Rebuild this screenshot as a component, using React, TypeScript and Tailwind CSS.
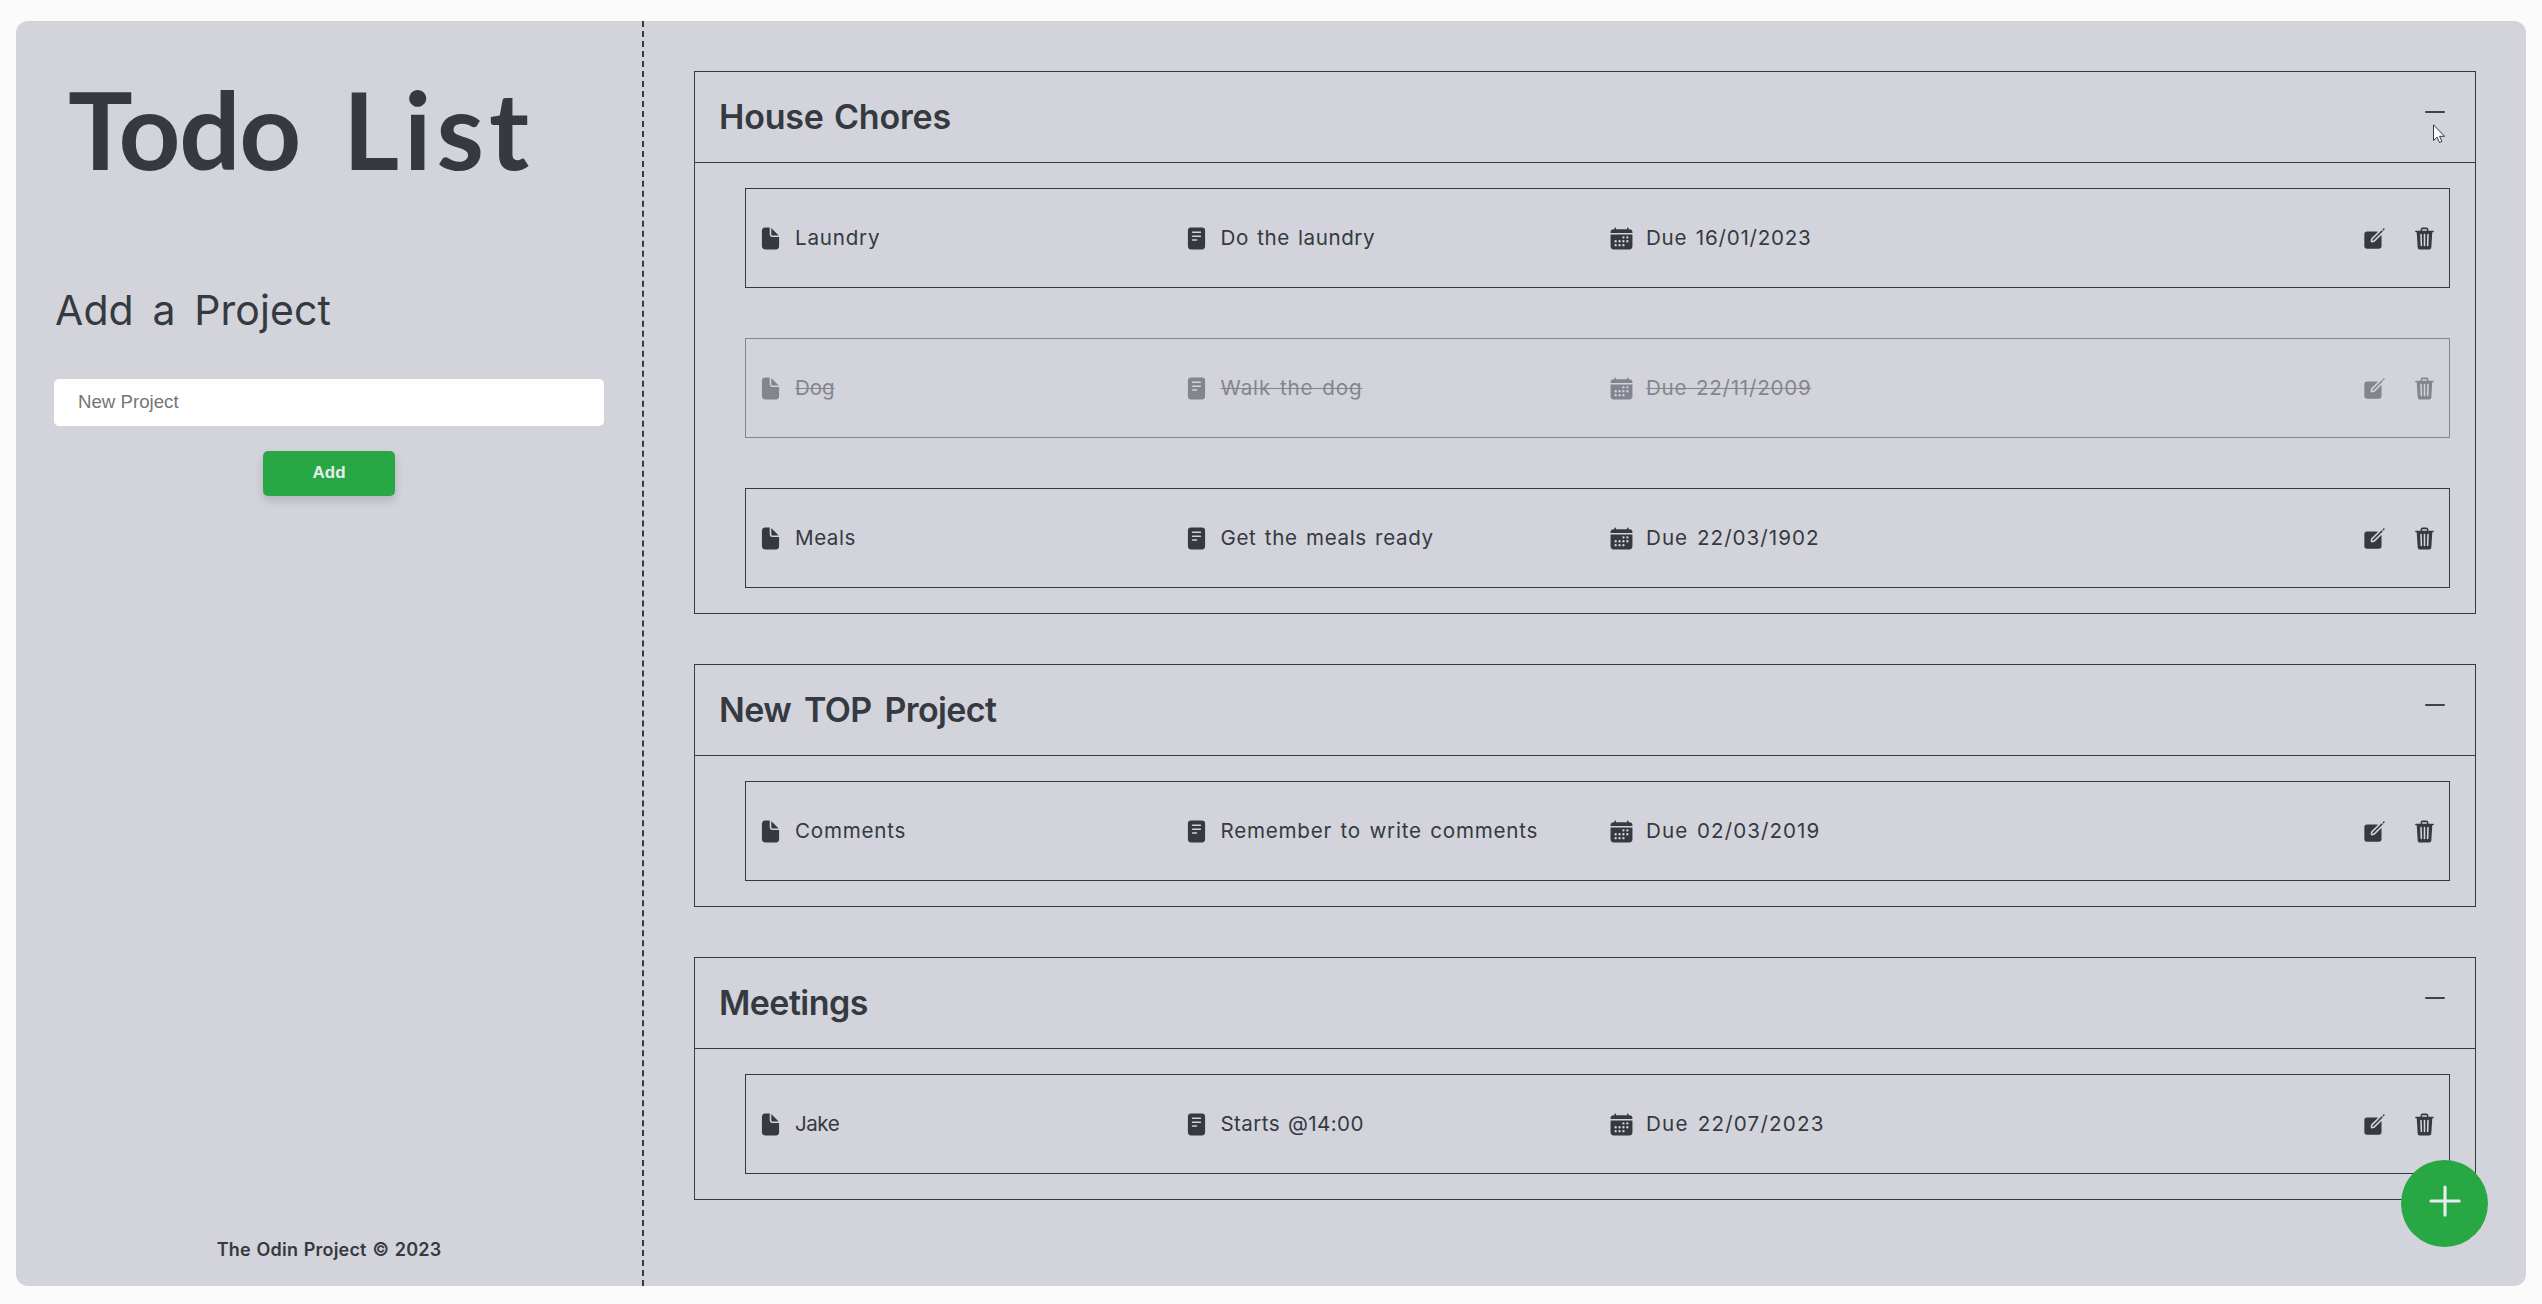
import type { ReactNode } from "react";
import { IoAdd, IoCalendar, IoCreate, IoDocument, IoReader, IoRemove, IoTrash } from "react-icons/io5";

type Label = { text: string; spacing: string };
type Todo = { title: Label; description: Label; due: Label; done?: boolean };
type Project = { name: Label; todos: Todo[] };

const projects: Project[] = [
  {
    name: { text: "House Chores", spacing: "tracking-[-0.2px] [word-spacing:2px]" },
    todos: [
      {
        title: { text: "Laundry", spacing: "tracking-[0.79px]" },
        description: { text: "Do the laundry", spacing: "tracking-[0.55px]" },
        due: { text: "Due 16/01/2023", spacing: "tracking-[0.75px]" },
      },
      {
        title: { text: "Dog", spacing: "tracking-[-0.1px]" },
        description: { text: "Walk the dog", spacing: "tracking-[0.9px]" },
        due: { text: "Due 22/11/2009", spacing: "tracking-[0.76px]" },
        done: true,
      },
      {
        title: { text: "Meals", spacing: "tracking-[0.53px]" },
        description: { text: "Get the meals ready", spacing: "tracking-[0.61px]" },
        due: { text: "Due 22/03/1902", spacing: "tracking-[1.03px]" },
      },
    ],
  },
  {
    name: { text: "New TOP Project", spacing: "tracking-[-0.62px] [word-spacing:5px]" },
    todos: [
      {
        title: { text: "Comments", spacing: "tracking-[0.75px]" },
        description: { text: "Remember to write comments", spacing: "tracking-[0.76px]" },
        due: { text: "Due 02/03/2019", spacing: "tracking-[1.05px]" },
      },
    ],
  },
  {
    name: { text: "Meetings", spacing: "tracking-[-0.55px]" },
    todos: [
      {
        title: { text: "Jake", spacing: "tracking-[-0.5px]" },
        description: { text: "Starts @14:00", spacing: "tracking-[0.38px]" },
        due: { text: "Due 22/07/2023", spacing: "tracking-[1.2px]" },
      },
    ],
  },
];

function Field({ icon, label, done }: { icon: ReactNode; label: Label; done?: boolean }) {
  return (
    <div className="flex items-center gap-3">
      {icon}
      <span className={`mb-px whitespace-nowrap text-[20.6px] leading-[25px] [word-spacing:2px] ${label.spacing} ${done ? "line-through decoration-1" : ""}`}>
        {label.text}
      </span>
    </div>
  );
}

function TodoRow({ todo }: { todo: Todo }) {
  return (
    <li className={`grid h-[100px] grid-cols-[425.5px_425.5px_425.5px_1fr] items-center border border-[#343a40] px-3 ${todo.done ? "opacity-50" : ""}`}>
      <Field icon={<IoDocument className="size-[25px]" />} label={todo.title} done={todo.done} />
      <Field icon={<IoReader className="size-[25px]" />} label={todo.description} done={todo.done} />
      <Field icon={<IoCalendar className="size-[25px]" />} label={todo.due} done={todo.done} />
      <div className="flex justify-end gap-[25px]">
        <IoCreate className="size-[25px]" />
        <IoTrash className="size-[25px]" />
      </div>
    </li>
  );
}

function ProjectCard({ project }: { project: Project }) {
  return (
    <section className="border border-[#343a40]">
      <header className="flex h-[91px] items-center justify-between border-b border-[#343a40] pr-6 pb-0.5 pl-6">
        <h3 className={`text-[34px] leading-[41px] font-semibold ${project.name.spacing}`}>{project.name.text}</h3>
        <IoRemove className="mb-[9px] size-8 text-[#404244]" />
      </header>
      <ul className="flex flex-col gap-[50px] py-[25px] pr-[25px] pl-[50px]">
        {project.todos.map((todo) => (
          <TodoRow key={todo.title.text} todo={todo} />
        ))}
      </ul>
    </section>
  );
}

export default function App() {
  return (
    <div className="h-[1304px] w-[2542px] overflow-hidden bg-[#fbfbfb] px-4 pt-[21px] font-['Inter',sans-serif] text-[#343a40]">
      <div className="relative flex h-[1265px] overflow-hidden rounded-xl bg-[#d3d3dc]">
        <aside className="flex w-[628px] shrink-0 flex-col border-r-2 border-dashed border-[#343a40] px-[38px] pb-[25px]">
          <h1 className="mt-[42px] ml-[14px] flex text-[108px] leading-[130px] font-bold font-['Lato',sans-serif]">
            <span className="w-[275px] tracking-[-1.3px]">Todo</span>
            <span className="tracking-[5px]">List</span>
          </h1>
          <h2 className="mt-[92px] ml-px text-[41px] leading-[50px] tracking-[0.1px] [word-spacing:7px]">Add a Project</h2>
          <input
            placeholder="New Project"
            className="mt-11 h-[47px] w-full rounded-[5px] bg-white px-6 pb-0.5 font-['Liberation_Sans',sans-serif] text-[18.66px] placeholder:text-[#757575]"
          />
          <button className="mt-[25px] h-[45px] w-[132px] self-center rounded-[5px] bg-[#28a745] pb-0.5 font-['Liberation_Sans',sans-serif] text-[17px] font-bold text-[#e9ecef] shadow-[0_5px_10px_rgba(0,0,0,0.15)]">
            Add
          </button>
          <footer className="mt-auto text-center text-lg leading-[22px] font-semibold tracking-[0.19px] [word-spacing:1px]">
            The Odin Project © 2023
          </footer>
        </aside>
        <main className="flex grow flex-col gap-[50px] p-[50px]">
          {projects.map((project) => (
            <ProjectCard key={project.name.text} project={project} />
          ))}
        </main>
        <button className="absolute right-[38px] bottom-[39px] flex size-[87px] items-center justify-center rounded-full bg-[#28a745] pb-[5px] text-[#e9ecef]">
          <IoAdd className="size-[50px]" />
        </button>
        <svg className="absolute top-[103px] right-[80px] h-5 w-[13px]" viewBox="0 0 13 20">
          <path d="M.5.8v15.7l3.6-3.3 2.4 5.3 2.4-1-2.3-5.2h4.9z" fill="#fff" stroke="#343a40" />
        </svg>
      </div>
    </div>
  );
}
